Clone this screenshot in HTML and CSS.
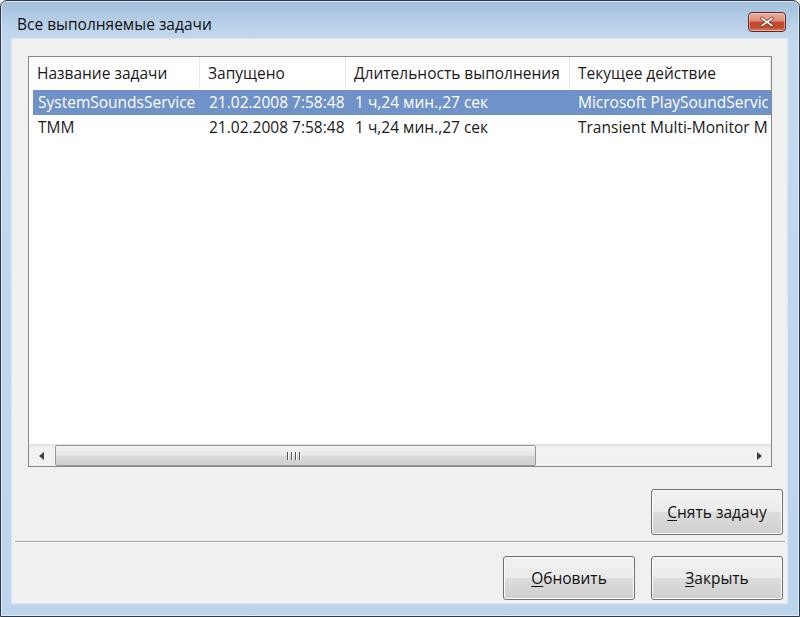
FILE: index.html
```html
<!DOCTYPE html>
<html lang="ru">
<head>
<meta charset="utf-8">
<title>Все выполняемые задачи</title>
<link rel="stylesheet" href="styles.css">
</head>
<body>
<div class="window">
  <div class="titlebar">
    <span class="title">Все выполняемые задачи</span>
    <button class="close" aria-label="Закрыть">
      <svg width="16" height="12" viewBox="0 0 16 12"><path d="M3 1 L8 4.5 L13 1 L15 2.5 L10 6 L15 9.5 L13 11 L8 7.5 L3 11 L1 9.5 L6 6 L1 2.5 Z" fill="#fff" stroke="#6b2317" stroke-width="0.8" stroke-linejoin="round"/></svg>
    </button>
  </div>
  <div class="client">
    <div class="listview">
      <div class="header">
        <div class="hcell c1">Название задачи</div>
        <div class="hcell c2">Запущено</div>
        <div class="hcell c3">Длительность выполнения</div>
        <div class="hcell c4">Текущее действие</div>
      </div>
      <div class="row selected">
        <div class="cell c1">SystemSoundsService</div>
        <div class="cell c2">21.02.2008 7:58:48</div>
        <div class="cell c3">1 ч,24 мин.,27 сек</div>
        <div class="cell c4">Microsoft PlaySoundServic</div>
      </div>
      <div class="row">
        <div class="cell c1">TMM</div>
        <div class="cell c2">21.02.2008 7:58:48</div>
        <div class="cell c3">1 ч,24 мин.,27 сек</div>
        <div class="cell c4">Transient Multi-Monitor M</div>
      </div>
      <div class="spacer"></div>
      <div class="hscroll">
        <div class="arrow left"><svg width="6" height="8" viewBox="0 0 6 8"><path d="M5 0 L5 8 L0 4 Z" fill="#404040"/></svg></div>
        <div class="track">
          <div class="thumb"><span class="grip"><i></i><i></i><i></i><i></i></span></div>
        </div>
        <div class="arrow right"><svg width="6" height="8" viewBox="0 0 6 8"><path d="M0 0 L0 8 L5 4 Z" fill="#404040"/></svg></div>
      </div>
    </div>
    <div class="actions top">
      <button class="btn"><u>С</u>нять задачу</button>
    </div>
    <div class="separator"></div>
    <div class="actions bottom">
      <button class="btn"><u>О</u>бновить</button>
      <button class="btn"><u>З</u>акрыть</button>
    </div>
  </div>
</div>
</body>
</html>
```

FILE: styles.css
```css
html, body {
  margin: 0;
  padding: 0;
  background: #ffffff;
}
body {
  width: 800px;
  height: 617px;
  overflow: hidden;
  font-family: "Open Sans", "Noto Sans", sans-serif;
}
.window {
  box-sizing: border-box;
  width: 800px;
  height: 617px;
  border: 1px solid #2c3a4a;
  border-radius: 7px 7px 0 0;
  background: linear-gradient(180deg, #a3bedb 0px, #b4cde7 18px, #c4d9ee 38px, #bcd4ec 100%);
  box-shadow: inset 0 0 0 1px #dfeaf6;
  display: flex;
  flex-direction: column;
}
.titlebar {
  height: 37px;
  box-sizing: border-box;
  display: flex;
  align-items: center;
  justify-content: space-between;
  padding: 8px 13px 0 16px;
  flex: none;
}
.title {
  font-family: "Open Sans", sans-serif;
  font-size: 15.5px;
  color: #111;
  letter-spacing: 0;
}
.close {
  width: 38px;
  height: 20px;
  padding: 0;
  border: 1px solid #5e2a22;
  border-radius: 4px;
  background: linear-gradient(180deg, #eab2a2 0%, #dc8b74 45%, #c34a2f 50%, #c04a30 80%, #e2876a 100%);
  box-shadow: inset 0 0 0 1px rgba(255,220,210,0.5);
  display: flex;
  align-items: center;
  justify-content: center;
  margin-top: -4px;
}
.client {
  flex: 1;
  margin: 0 11px 12px 10px;
  background: #f0f0f0;
  border: 1px solid #dde6f0;
  display: flex;
  flex-direction: column;
}
.listview {
  margin: 17px 15px 0 16px;
  height: 411px;
  box-sizing: border-box;
  border: 1px solid #828790;
  background: #fff;
  display: flex;
  flex-direction: column;
  font-size: 15.5px;
  color: #1a1a1a;
}
.header {
  height: 32px;
  display: flex;
  flex: none;
}
.hcell {
  box-sizing: border-box;
  border-right: 1px solid #e6e8eb;
  padding-left: 8px;
  line-height: 32px;
  white-space: nowrap;
  overflow: hidden;
}
.c1 { width: 171px; }
.c2 { width: 146px; }
.c3 { width: 224px; }
.c4 { width: 201px; }
.row {
  height: 25px;
  display: flex;
  flex: none;
  margin: 0 0 0 4px;
}
.row .c1 { width: 167px; }
.row.selected {
  margin-top: 1px;
  background: #6f92c8;
  color: #fff;
}
.cell {
  box-sizing: border-box;
  padding-left: 5px;
  line-height: 25px;
  white-space: nowrap;
  overflow: hidden;
}
.row .c2 { padding-left: 9px; }
.row .c3 { padding-left: 9px; }
.row .c4 { padding-left: 8px; width: 198px; }
.spacer { flex: 1; }
.hscroll {
  height: 21px;
  flex: none;
  display: flex;
  background: linear-gradient(180deg, #e4e4e4 0, #f2f2f2 3px, #f0f0f0 100%);
  border-top: 1px solid #e0e0e0;
}
.arrow {
  width: 26px;
  display: flex;
  align-items: center;
  justify-content: center;
  flex: none;
}
.arrow.right { width: 22px; }
.track {
  flex: 1;
  display: flex;
}
.thumb {
  width: 481px;
  box-sizing: border-box;
  border: 1px solid #979797;
  border-radius: 2px;
  background: linear-gradient(180deg, #f3f3f3 0%, #e8e8e8 45%, #d8d8d8 55%, #cfcfcf 100%);
  display: flex;
  align-items: center;
  justify-content: center;
}
.grip {
  display: flex;
  gap: 2px;
  margin-right: 4px;
}
.grip i {
  display: block;
  width: 1px;
  height: 8px;
  background: #555;
  border-right: 1px solid #fff;
}
.actions {
  display: flex;
  justify-content: flex-end;
  gap: 16px;
  margin-right: 4px;
}
.actions.top { margin-top: 22px; }
.actions.bottom { margin-top: 13px; }
.btn {
  width: 132px;
  height: 46px;
  box-sizing: border-box;
  border: 1px solid #707070;
  border-radius: 3px;
  background: linear-gradient(180deg, #f2f2f2 0%, #ebebeb 49%, #dddddd 50%, #cfcfcf 100%);
  box-shadow: inset 0 0 0 1px #fcfcfc;
  font-family: "Open Sans", sans-serif;
  font-size: 15.5px;
  color: #111;
  padding: 0;
}
.actions.bottom .btn { height: 44px; }
.btn u { text-decoration-thickness: 1px; text-underline-offset: 2px; }
.separator {
  margin: 6px 2px 0 3px;
  height: 1px;
  background: #a0a0a0;
  border-bottom: 1px solid #ffffff;
}
```
